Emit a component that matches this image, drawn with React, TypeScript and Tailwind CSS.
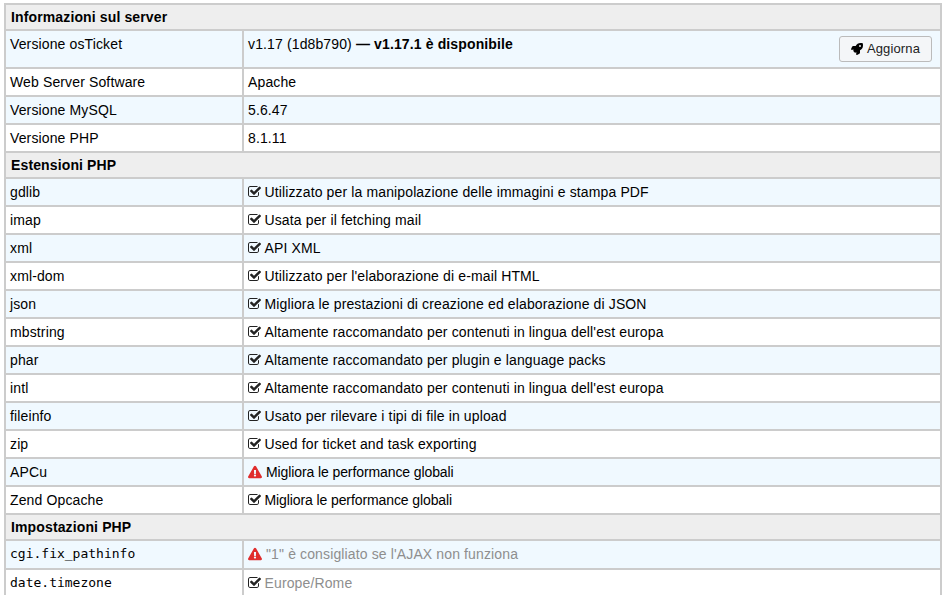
import { FaExclamationTriangle, FaRocket } from 'react-icons/fa'

type Row = {
  name: string
  text: string
  warn?: boolean
  mono?: boolean
  faded?: boolean
  height?: string
  tight?: boolean
}

const extensions: Row[] = [
  { name: 'gdlib', text: 'Utilizzato per la manipolazione delle immagini e stampa PDF' },
  { name: 'imap', text: 'Usata per il fetching mail' },
  { name: 'xml', text: 'API XML' },
  { name: 'xml-dom', text: "Utilizzato per l'elaborazione di e-mail HTML" },
  { name: 'json', text: 'Migliora le prestazioni di creazione ed elaborazione di JSON' },
  { name: 'mbstring', text: "Altamente raccomandato per contenuti in lingua dell'est europa" },
  { name: 'phar', text: 'Altamente raccomandato per plugin e language packs' },
  { name: 'intl', text: "Altamente raccomandato per contenuti in lingua dell'est europa" },
  { name: 'fileinfo', text: 'Usato per rilevare i tipi di file in upload' },
  { name: 'zip', text: 'Used for ticket and task exporting' },
  { name: 'APCu', text: 'Migliora le performance globali', warn: true, tight: true },
  { name: 'Zend Opcache', text: 'Migliora le performance globali', tight: true },
]

const settings: Row[] = [
  { name: 'cgi.fix_pathinfo', text: '"1" è consigliato se l\'AJAX non funziona', warn: true, mono: true, faded: true, height: 'h-[29px]' },
  { name: 'date.timezone', text: 'Europe/Rome', mono: true, faded: true, height: 'h-[29px]' },
]

// fa-check-square-o, not in the react-icons fa set
function CheckSquare() {
  return (
    <svg viewBox="0 0 1664 1792" className="mr-[3.5px] h-[14px] w-[13px] shrink-0" fill="#222222">
      <path d="M1408 930v318q0 119-84.5 203.5t-203.5 84.5h-832q-119 0-203.5-84.5t-84.5-203.5v-832q0-119 84.5-203.5t203.5-84.5h832q63 0 117 25 15 7 18 23 3 17-9 29l-49 49q-14 14-32 8-23-6-45-6h-832q-66 0-113 47t-47 113v832q0 66 47 113t113 47h832q66 0 113-47t47-113v-254q0-13 9-22l64-64q15-15 35-7t20 29zm231-489l-814 814q-24 24-57 24t-57-24l-430-430q-24-24-24-57t24-57l110-110q24-24 57-24t57 24l263 263 647-647q24-24 57-24t57 24l110 110q24 24 24 57t-24 57z" />
    </svg>
  )
}

function Section({ title }: { title: string }) {
  return (
    <div className="flex h-[26px] items-center border-b-2 border-[#cccccc] bg-[#eeeeee] pl-[5px] font-bold text-[#000000]">
      {title}
    </div>
  )
}

function InfoRow({ odd, name, mono, height = 'h-[28px]', children }: {
  odd: boolean
  name: string
  mono?: boolean
  height?: string
  children: React.ReactNode
}) {
  return (
    <div className={`flex border-b-2 border-[#cccccc] ${height} ${odd ? 'bg-[#f0f9ff]' : 'bg-white'}`}>
      <div className={`w-[238px] shrink-0 border-r-2 border-[#cccccc] pt-[4px] pl-[4px] ${mono ? "font-['DejaVu_Sans_Mono',monospace] text-[13px] tracking-normal" : ''}`}>
        {name}
      </div>
      <div className="relative min-w-0 flex-1 pt-[4px] pl-[4px]">{children}</div>
    </div>
  )
}

function StatusRow({ row, odd }: { row: Row; odd: boolean }) {
  return (
    <InfoRow odd={odd} name={row.name} mono={row.mono} height={row.height}>
      <span className="flex items-center">
        {row.warn ? (
          <FaExclamationTriangle className="mr-[4px] h-[14px] w-[14px] shrink-0 text-[#e02d2d]" />
        ) : (
          <CheckSquare />
        )}
        <span className={`${row.faded ? 'text-[#8e8e8e]' : ''} ${row.tight ? 'tracking-[-0.1px]' : ''}`}>{row.text}</span>
      </span>
    </InfoRow>
  )
}

export default function App() {
  return (
    <div className="h-[595px] overflow-hidden bg-white pt-[3px] pl-[4px] font-['Liberation_Sans',Arial,sans-serif] text-[14px] leading-[18px] tracking-[0.13px] text-[#000000]">
      <div className="w-[938px] border-x-2 border-t-2 border-[#cccccc]">
        <Section title="Informazioni sul server" />
        <InfoRow odd name="Versione osTicket" height="h-[38px]">
          v1.17 (1d8b790) <b>— v1.17.1 è disponibile</b>
          <button
            type="button"
            className="absolute top-[5px] right-[8px] flex h-[26px] w-[93px] items-center justify-center gap-[4px] rounded-[3px] border border-[#bbbbbb] bg-[#f4f6f8] text-[13px] text-[#222222]"
          >
            <FaRocket className="h-[12px] w-[12px] text-[#000000]" />
            Aggiorna
          </button>
        </InfoRow>
        <InfoRow odd={false} name="Web Server Software">Apache</InfoRow>
        <InfoRow odd name="Versione MySQL">5.6.47</InfoRow>
        <InfoRow odd={false} name="Versione PHP">8.1.11</InfoRow>
        <Section title="Estensioni PHP" />
        {extensions.map((row, i) => (
          <StatusRow key={row.name} row={row} odd={i % 2 === 0} />
        ))}
        <Section title="Impostazioni PHP" />
        {settings.map((row, i) => (
          <StatusRow key={row.name} row={row} odd={i % 2 === 0} />
        ))}
      </div>
    </div>
  )
}
